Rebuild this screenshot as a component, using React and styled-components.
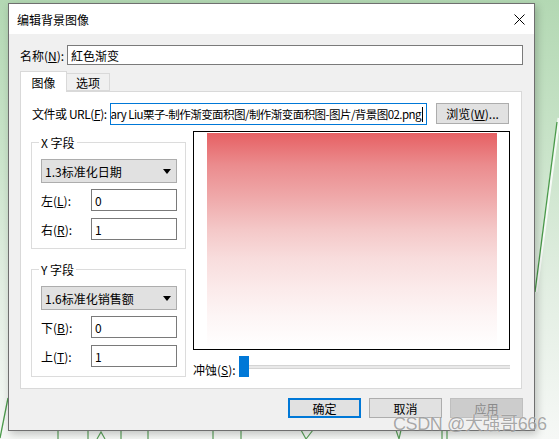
import React from 'react'
import styled, { createGlobalStyle } from 'styled-components'

const GlobalStyle = createGlobalStyle`
  html, body {
    margin: 0;
    padding: 0;
  }
  body {
    font-family: "Noto Sans CJK SC", "Noto Sans", sans-serif;
    font-size: 12px;
    color: #000;
    background: #f4f7f4;
  }
`

const Desktop = styled.div`
  position: relative;
  width: 559px;
  height: 439px;
  overflow: hidden;
  box-sizing: border-box;
  padding: 3px 0 0 8px;
  background: linear-gradient(180deg, #b3d8b3 0%, #cae4ca 35%, #e2eee2 65%, #f6f8f6 100%);
`

const Wallpaper = styled.svg`
  position: absolute;
  left: 0;
  top: 0;
`

const Dialog = styled.div`
  position: relative;
  width: 527px;
  height: 428px;
  box-sizing: border-box;
  border: 1px solid #6f6f6f;
  background: #f0f0f0;
  box-shadow: 2px 3px 8px rgba(0, 0, 0, 0.22);
  display: flex;
  flex-direction: column;
`

const TitleBar = styled.div`
  height: 30px;
  flex-shrink: 0;
  background: #fff;
  display: flex;
  align-items: center;
  justify-content: space-between;
  padding-left: 8px;
`

const CloseButton = styled.div`
  width: 30px;
  height: 30px;
  display: flex;
  align-items: center;
  justify-content: center;
`

const Body = styled.div`
  padding: 11px 11px 0 11px;
  display: flex;
  flex-direction: column;
`

const Row = styled.div`
  display: flex;
  align-items: ${p => p.$align || 'center'};
`

const Label = styled.span`
  width: ${p => p.$w}px;
  flex-shrink: 0;
  white-space: nowrap;
  letter-spacing: ${p => p.$tight || 0}px;
`

const Key = styled.span`
  text-decoration: underline;
  text-underline-offset: 1px;
`

const TextBox = styled.div`
  width: ${p => p.$w}px;
  height: ${p => p.$h || 22}px;
  flex-shrink: 0;
  box-sizing: border-box;
  border: 1px solid ${p => (p.$focused ? '#0078d7' : '#7a7a7a')};
  background: #fff;
  display: flex;
  align-items: center;
  justify-content: ${p => (p.$end ? 'flex-end' : 'flex-start')};
  padding: 0 3px;
  overflow: hidden;
  white-space: nowrap;
`

const PathText = styled.span`
  font-size: 11.5px;
  letter-spacing: -0.55px;
`

const Caret = styled.span`
  width: 1px;
  height: 15px;
  background: #000;
  margin-left: 1px;
  flex-shrink: 0;
`

const TabStrip = styled.div`
  display: flex;
  align-items: flex-end;
  height: 20px;
  margin-top: 6px;
  position: relative;
  z-index: 1;
`

const Tab = styled.div`
  box-sizing: border-box;
  width: ${p => p.$w}px;
  height: ${p => (p.$active ? 21 : 18)}px;
  margin-bottom: ${p => (p.$active ? -1 : 0)}px;
  border: 1px solid #d9d9d9;
  border-bottom: ${p => (p.$active ? 'none' : '1px solid #d9d9d9')};
  border-left: ${p => (p.$active ? '1px solid #d9d9d9' : 'none')};
  background: ${p => (p.$active ? '#fff' : '#f0f0f0')};
  display: flex;
  align-items: center;
  justify-content: center;
`

const Panel = styled.div`
  width: 502px;
  height: 298px;
  box-sizing: border-box;
  border: 1px solid #d9d9d9;
  background: #fff;
  padding: 11px 11px 0 10px;
  display: flex;
  flex-direction: column;
`

const FileRow = styled(Row)`
  margin-left: 1px;
  align-items: flex-start;
`

const FileLabel = styled(Label)`
  line-height: 22px;
`

const Button = styled.div`
  width: ${p => p.$w || 73}px;
  height: ${p => p.$h || 20}px;
  box-sizing: border-box;
  display: flex;
  align-items: center;
  justify-content: center;
  background: ${p => (p.$disabled ? '#cccccc' : '#e1e1e1')};
  border: ${p => (p.$primary ? '2px solid #0078d7' : p.$disabled ? '1px solid #bfbfbf' : '1px solid #adadad')};
  color: ${p => (p.$disabled ? '#8a8a8a' : '#000')};
  margin-left: ${p => p.$ml || 0}px;
`

const Content = styled.div`
  display: flex;
  gap: 7px;
  margin-top: 6px;
`

const LeftColumn = styled.div`
  width: 155px;
  margin-top: 11px;
  display: flex;
  flex-direction: column;
  gap: 20px;
`

const Group = styled.div`
  position: relative;
  box-sizing: border-box;
  height: ${p => p.$h}px;
  border: 1px solid #dcdcdc;
  padding: 16px 8px 0 9px;
  display: flex;
  flex-direction: column;
`

const Legend = styled.span`
  position: absolute;
  top: -9px;
  left: 7px;
  padding: 0 2px;
  background: #fff;
  line-height: 17px;
`

const Dropdown = styled.div`
  height: 24px;
  box-sizing: border-box;
  border: 1px solid #adadad;
  background: #e1e1e1;
  display: flex;
  align-items: center;
  justify-content: space-between;
  padding: 0 5px 0 3px;
`

const FieldRow = styled(Row)`
  margin-top: ${p => p.$mt}px;
`

const RightColumn = styled.div`
  width: 317px;
  display: flex;
  flex-direction: column;
`

const Preview = styled.div`
  height: 219px;
  box-sizing: border-box;
  border: 1px solid #000;
  background: #fff;
  display: flex;
  justify-content: center;
  padding-top: 1px;
`

const GradientImage = styled.div`
  width: 290px;
  height: 215px;
  background: linear-gradient(180deg, #e66063 0%, #eb8c8e 15%, #efa9aa 30%, #f4c8c8 45%, #f8dcdc 58%, #fbeaea 72%, #fdf5f5 85%, #ffffff 100%);
`

const SliderRow = styled(Row)`
  margin-top: 6px;
  height: 21px;
`

const SliderLabel = styled(Label)`
  padding-top: 6px;
`

const Thumb = styled.div`
  width: 10px;
  height: 21px;
  background: #0078d7;
  flex-shrink: 0;
`

const Track = styled.div`
  flex: 1;
  height: 4px;
  box-sizing: border-box;
  background: #e9e9e9;
  border-top: 1px solid #d4d4d4;
  border-bottom: 1px solid #d4d4d4;
`

const Footer = styled.div`
  display: flex;
  justify-content: flex-end;
  gap: 8px;
  margin-top: 9px;
`

const Watermark = styled.div`
  position: absolute;
  left: 393px;
  top: 409px;
  font-family: "Liberation Sans", "Noto Sans CJK SC", sans-serif;
  font-size: 18px;
  letter-spacing: -0.4px;
  color: rgba(95, 95, 95, 0.55);
  text-shadow: 0 0 1px rgba(255, 255, 255, 0.9);
  white-space: nowrap;
  z-index: 2;
`

function Arrow() {
  return (
    <svg width="8" height="5" viewBox="0 0 8 5">
      <polygon points="0,0 8,0 4,5" fill="#000" />
    </svg>
  )
}

function FieldGroup({ title, option, rows, height }) {
  return (
    <Group $h={height}>
      <Legend>{title}</Legend>
      <Dropdown>
        <span>{option}</span>
        <Arrow />
      </Dropdown>
      {rows.map((r, i) => (
        <FieldRow key={r.key} $mt={i === 0 ? 6 : 7}>
          <Label $w={50}>{r.name}(<Key>{r.key}</Key>):</Label>
          <TextBox $w={86}>{r.value}</TextBox>
        </FieldRow>
      ))}
    </Group>
  )
}

function App() {
  return (
    <Desktop>
      <GlobalStyle />
      <Wallpaper width="559" height="439" viewBox="0 0 559 439">
        <path d="M559 118 L536 292" stroke="#ffffff" strokeWidth="3" fill="none" opacity="0.8" />
        <path d="M557 122 L535 292" stroke="#4a9a4a" strokeWidth="1.3" fill="none" />
        <path d="M0 438 L8 398" stroke="#4a9a4a" strokeWidth="1.3" fill="none" />
        {[58, 88, 121, 148, 213, 241, 442, 447].map(x => (
          <path key={x} d={`M${x} 430 L${x} 439`} stroke="#5aa05a" strokeWidth="1.2" />
        ))}
        <path d="M97 439 L101 432 L105 439" stroke="#5aa05a" strokeWidth="1.2" fill="none" />
        <path d="M301 430 L306 439 L313 430" stroke="#5aa05a" strokeWidth="1.2" fill="none" />
        <path d="M396 430 L399 439 L401 430" stroke="#5aa05a" strokeWidth="1.2" fill="none" />
      </Wallpaper>
      <Dialog>
        <TitleBar>
          <span>编辑背景图像</span>
          <CloseButton>
            <svg width="11" height="11" viewBox="0 0 11 11">
              <path d="M0.5 0.5 L10.5 10.5 M10.5 0.5 L0.5 10.5" stroke="#000" strokeWidth="1" />
            </svg>
          </CloseButton>
        </TitleBar>
        <Body>
          <Row>
            <Label $w={47}>名称(<Key>N</Key>):</Label>
            <TextBox $w={456} $h={20}>紅色渐变</TextBox>
          </Row>
          <TabStrip>
            <Tab $active $w={47}>图像</Tab>
            <Tab $w={43}>选项</Tab>
          </TabStrip>
          <Panel>
            <FileRow>
              <FileLabel $w={78} $tight={-0.45}>文件或 URL(<Key>F</Key>):</FileLabel>
              <TextBox $w={317} $focused $end>
                <PathText>ary Liu栗子-制作渐变面积图/制作渐变面积图-图片/背景图02.png</PathText>
                <Caret />
              </TextBox>
              <Button $w={73} $h={21} $ml={9}>浏览(<Key>W</Key>)...</Button>
            </FileRow>
            <Content>
              <LeftColumn>
                <FieldGroup
                  title="X 字段"
                  option="1.3标准化日期"
                  height={107}
                  rows={[
                    { name: '左', key: 'L', value: '0' },
                    { name: '右', key: 'R', value: '1' },
                  ]}
                />
                <FieldGroup
                  title="Y 字段"
                  option="1.6标准化销售额"
                  height={108}
                  rows={[
                    { name: '下', key: 'B', value: '0' },
                    { name: '上', key: 'T', value: '1' },
                  ]}
                />
              </LeftColumn>
              <RightColumn>
                <Preview>
                  <GradientImage />
                </Preview>
                <SliderRow>
                  <SliderLabel $w={46}>冲蚀(<Key>S</Key>):</SliderLabel>
                  <Thumb />
                  <Track />
                </SliderRow>
              </RightColumn>
            </Content>
          </Panel>
          <Footer>
            <Button $primary>确定</Button>
            <Button>取消</Button>
            <Button $disabled>应用</Button>
          </Footer>
        </Body>
      </Dialog>
      <Watermark>CSDN @大强哥666</Watermark>
    </Desktop>
  )
}

export default App
